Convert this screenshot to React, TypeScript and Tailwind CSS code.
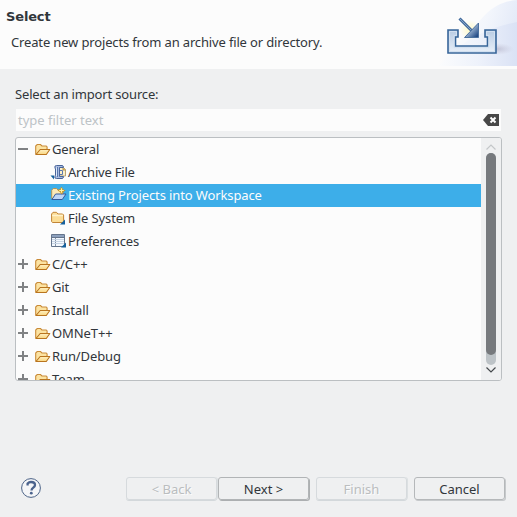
import React from 'react';

function FolderIcon() {
  return (
    <svg width="16" height="14" viewBox="0 0 16 14" className="shrink-0">
      <defs>
        <linearGradient id="fold" x1="0" y1="0" x2="0" y2="1">
          <stop offset="0" stopColor="#fff1c4" />
          <stop offset="1" stopColor="#f9d680" />
        </linearGradient>
      </defs>
      <path d="M0.7 12V4L2.200 2.500h3.300l1.400 1.500h4.300l.9 1v2L3.200 12z" fill="#fce3a2" stroke="#c98b38" strokeWidth="1.1" />
      <path d="M1 12.500L5.200 7.500h9.600L11.300 12.500z" fill="url(#fold)" stroke="#b9741e" strokeWidth="1.100" strokeLinejoin="round" />
    </svg>
  );
}

function ArchiveIcon() {
  return (
    <svg width="18" height="16" viewBox="0 0 18 16" className="shrink-0">
      <path d="M0.5 11.500h3.500v4z" fill="#15609d" />
      <path d="M9.500 3.500h4l2 2v6.500h-6z" fill="#fbefc8" stroke="#b6a274" />
      <path d="M13 3.500v2.500h2.500" fill="#eac46e" stroke="#b6954f" />
      <path d="M6.500 1.500h5.500q1.500 0 1.500 2h-4v9h4q0 2-1.500 2H6.500q-2.500 0-1.500-2.500l.5-1V5l-.5-1q-.8-2.500 1.500-2.500z" fill="#a9bce0" stroke="#4a6599" />
      <path d="M7.500 3v10M10 6.500h2.500v4H10" fill="none" stroke="#5a78b0" />
      <path d="M6.500 3.500v8.500" stroke="#dce7f8" />
    </svg>
  );
}

function ImportProjectIcon() {
  return (
    <svg width="16" height="16" viewBox="0 0 16 16" className="shrink-0">
      <path d="M0.7 11.500V3.200L2.200 1.500h3.300L7 3h5v5L3 12z" fill="#fbe9b8" stroke="#b49555" />
      <path d="M0.9 12.500L4.600 7H15L11.300 12.500z" fill="#bcd5f6" stroke="#345b9c" strokeLinejoin="round" />
      <path d="M10.500 -.2l1.500 2.500L14.500 3.500 12 5l-1.500 2.500L9 5 6.500 3.500 9 2z" fill="#c99320" />
      <path d="M10.500 1.200v4.600M8.200 3.500h4.600" stroke="#fff3a5" strokeWidth="1.200" />
    </svg>
  );
}

function FileSystemIcon() {
  return (
    <svg width="16" height="16" viewBox="0 0 16 16" className="shrink-0">
      <path d="M0.6 11.500V4L2 2.300h3.500L6.900 4h4.700l1 1v6.500l-.8 1H1.400z" fill="#fbdd96" stroke="#c18436" />
      <path d="M1.200 5.500h10.700" stroke="#fff3cd" strokeWidth="1.300" />
      <path d="M14 9.500v5H9z" fill="#15609d" />
    </svg>
  );
}

function PreferencesIcon() {
  return (
    <svg width="16" height="16" viewBox="0 0 16 16" className="shrink-0">
      <path d="M.5 1.500h13v12H.5z" fill="#f3f8fe" stroke="#65758c" />
      <path d="M1 2h12v2H1z" fill="#8ca0bd" />
      <path d="M.5 4.500h13" stroke="#65758c" />
      <path d="M4.500 5v8" stroke="#8493a8" />
      <path d="M1 6.500h12M1 8.500h12M1 10.500h12" stroke="#c8d5e5" />
      <path d="M15 9.500v5h-5z" fill="#15609d" />
    </svg>
  );
}

function Toggle({ open }: { open?: boolean }) {
  return (
    <svg width="10" height="10" viewBox="0 0 10 10" className="mb-px shrink-0" shapeRendering="crispEdges">
      <path d="M0 4h10v2H0z" fill="#808284" />
      {!open && <path d="M4 0h2v10H4z" fill="#808284" />}
    </svg>
  );
}

function Category({ label, open }: { label: string; open?: boolean }) {
  return (
    <div className="flex h-[23px] shrink-0 items-center pl-[2px]">
      <Toggle open={open} />
      <span className="mb-px ml-[7px] flex"><FolderIcon /></span>
      <span className="ml-px pb-[2px] tracking-[-0.1px]">{label}</span>
    </div>
  );
}

function Leaf({ label, icon, selected, archive }: { label: string; icon: React.ReactNode; selected?: boolean; archive?: boolean }) {
  return (
    <div className={`flex h-[23px] shrink-0 items-center ${selected ? 'bg-[#3daee9] text-[#fcfcfc]' : ''}`}>
      <span className={`mb-px flex w-[52px] ${archive ? 'pl-[34px]' : 'pl-[35px]'}`}>{icon}</span>
      <span className={`pb-[2px] ${archive ? 'tracking-[-0.2px]' : 'tracking-[-0.12px]'}`}>{label}</span>
    </div>
  );
}

function ImportBanner() {
  return (
    <svg width="78" height="66" viewBox="439 0 78 66">
      <defs>
        <linearGradient id="sky" gradientUnits="userSpaceOnUse" x1="450" y1="20" x2="517" y2="40">
          <stop offset="0" stopColor="#fcfcfc" />
          <stop offset=".5" stopColor="#f3f6fc" />
          <stop offset="1" stopColor="#e1e8f7" />
        </linearGradient>
        <linearGradient id="sweep" gradientUnits="userSpaceOnUse" x1="439" y1="0" x2="517" y2="0">
          <stop offset="0" stopColor="#fbfcfd" />
          <stop offset=".5" stopColor="#eef2fb" />
          <stop offset="1" stopColor="#dae2f5" />
        </linearGradient>
        <linearGradient id="tray" x1="0" y1="0" x2="0" y2="1">
          <stop offset="0" stopColor="#b8cbe3" />
          <stop offset="1" stopColor="#e9f0f9" />
        </linearGradient>
        <linearGradient id="head" x1="0" y1="0" x2="1" y2="1">
          <stop offset=".35" stopColor="#b6cbe2" />
          <stop offset=".9" stopColor="#234b86" />
        </linearGradient>
        <radialGradient id="glow">
          <stop offset="0" stopColor="#fffac8" />
          <stop offset="1" stopColor="#fffac8" stopOpacity="0" />
        </radialGradient>
        <radialGradient id="shade">
          <stop offset="0" stopColor="#a9a9c0" stopOpacity=".6" />
          <stop offset="1" stopColor="#c4c1d3" stopOpacity="0" />
        </radialGradient>
      </defs>
      <path d="M439 66V53C460 45 472 29 484 16C494 5 505 1 517 0V66z" fill="url(#sky)" />
      <path d="M439 66C460 40 490 27 517 22V66z" fill="url(#sweep)" />
      <ellipse cx="497" cy="49" rx="17" ry="6" fill="url(#shade)" />
      <circle cx="470" cy="30" r="10" fill="url(#glow)" />
      <path d="M448 30h10v7h-2.500v9h32v-9H485v-7h11v23h-48z" fill="url(#tray)" stroke="#376599" strokeWidth="1.600" />
      <path d="M449.500 31.500h7v4H454v12h35v-12h-2.500v-4h8v20h-45z" fill="none" stroke="#d2e0f0" strokeWidth="1" />
      <path d="M459.500 18.500l13 13" stroke="#426b9d" strokeWidth="3" />
      <path d="M460 19l11 11" stroke="#86a4c6" strokeWidth="1" />
      <path d="M478.500 23v14.500H464.500z" fill="url(#head)" stroke="#4b719f" />
    </svg>
  );
}

function DialogButton({ label, kind }: { label: string; kind: 'disabled' | 'focus' | 'normal' }) {
  const look = {
    disabled: 'border-[#d6dadd] text-[#babdbf] shadow-[0_1px_0_#d3d8db,1px_0_0_#dce0e2] [text-shadow:1px_1px_0_#fcfcfc]',
    focus: 'border-[#b1b4b6] shadow-[1px_1px_0_#acafb1]',
    normal: 'border-[#b5b8ba] shadow-[1px_1px_0_#c6c9cb]',
  }[kind];
  return (
    <button className={`flex h-[23px] w-[91px] items-center justify-center rounded-[3px] border pt-px ${look}`}>{label}</button>
  );
}

export default function App() {
  return (
    <div className="flex h-[517px] w-[517px] flex-col overflow-hidden bg-[#eff0f1] font-['Noto_Sans',sans-serif] text-[13px] leading-[18px] text-[#31363b]">
      <header className="flex h-[69px] shrink-0 justify-between bg-[#fcfcfc]">
        <div>
          <h1 className="pl-[6px] pt-[8px] font-['DejaVu_Sans',sans-serif] text-[13px] font-bold tracking-[-0.15px]">Select</h1>
          <p className="pl-[11px] pt-[7px] tracking-[-0.15px]">Create new projects from an archive file or directory.</p>
        </div>
        <ImportBanner />
      </header>

      <main className="flex flex-col pl-[15px] pt-[16px]">
        <label className="h-[24px] tracking-[-0.16px]">Select an import source:</label>
        <div className="ml-px flex h-[22px] w-[485px] items-center justify-between bg-[#fcfcfc] pl-[2px] pr-[2px] text-[#bdc3c7]">
          <span>type filter text</span>
          <svg width="16" height="12" viewBox="0 0 16 12">
            <path d="M0 6l5-6h11v12H5z" fill="#484848" />
            <path d="M7.500 3.500l5 5M12.500 3.500l-5 5" stroke="#fff" strokeWidth="2" />
          </svg>
        </div>

        <div className="mt-[6px] flex h-[244px] w-[487px] overflow-hidden rounded-[3px] border border-[#bbbfc2] bg-[#fcfcfc]">
          <div className="flex grow flex-col overflow-hidden">
            <Category label="General" open />
            <Leaf label="Archive File" icon={<ArchiveIcon />} archive />
            <Leaf label="Existing Projects into Workspace" icon={<ImportProjectIcon />} selected />
            <Leaf label="File System" icon={<FileSystemIcon />} />
            <Leaf label="Preferences" icon={<PreferencesIcon />} />
            <Category label="C/C++" />
            <Category label="Git" />
            <Category label="Install" />
            <Category label="OMNeT++" />
            <Category label="Run/Debug" />
            <Category label="Team" />
          </div>
          <div className="flex w-[20px] shrink-0 flex-col items-center bg-[#eff0f1]">
            <svg width="12" height="15" viewBox="0 0 12 15" className="shrink-0">
              <path d="M1.500 11.500L6 7l4.500 4.500" fill="none" stroke="#c4c7c9" strokeWidth="1.200" />
            </svg>
            <div className="h-[212px] w-[10px] rounded-full bg-[#bdc3c7]">
              <div className="h-[202px] rounded-full bg-[#76797d]" />
            </div>
            <svg width="12" height="15" viewBox="0 0 12 15" className="shrink-0">
              <path d="M1.500 2.500L6 7l4.500-4.500" fill="none" stroke="#45494d" strokeWidth="1.200" />
            </svg>
          </div>
        </div>
      </main>

      <footer className="mt-[96px] flex h-[24px] items-start pl-[21px]">
        <svg width="20" height="22" viewBox="0 0 20 22" className="mr-[85px]">
          <circle cx="10" cy="11" r="9.400" fill="#f5f6f8" stroke="#4d6488" strokeWidth="1" />
          <path d="M6.600 8.500V6.500Q8 5 10 5c2.500 0 4 1.200 4 3 0 2.800-3.500 2.600-3.500 5.500" fill="none" stroke="#4b638d" strokeWidth="2.300" />
          <circle cx="10.300" cy="16.200" r="1.400" fill="#4b638d" />
        </svg>
        <div className="flex gap-[7px]">
          <div className="flex gap-px">
            <DialogButton label="< Back" kind="disabled" />
            <DialogButton label="Next >" kind="focus" />
          </div>
          <DialogButton label="Finish" kind="disabled" />
          <DialogButton label="Cancel" kind="normal" />
        </div>
      </footer>
    </div>
  );
}
